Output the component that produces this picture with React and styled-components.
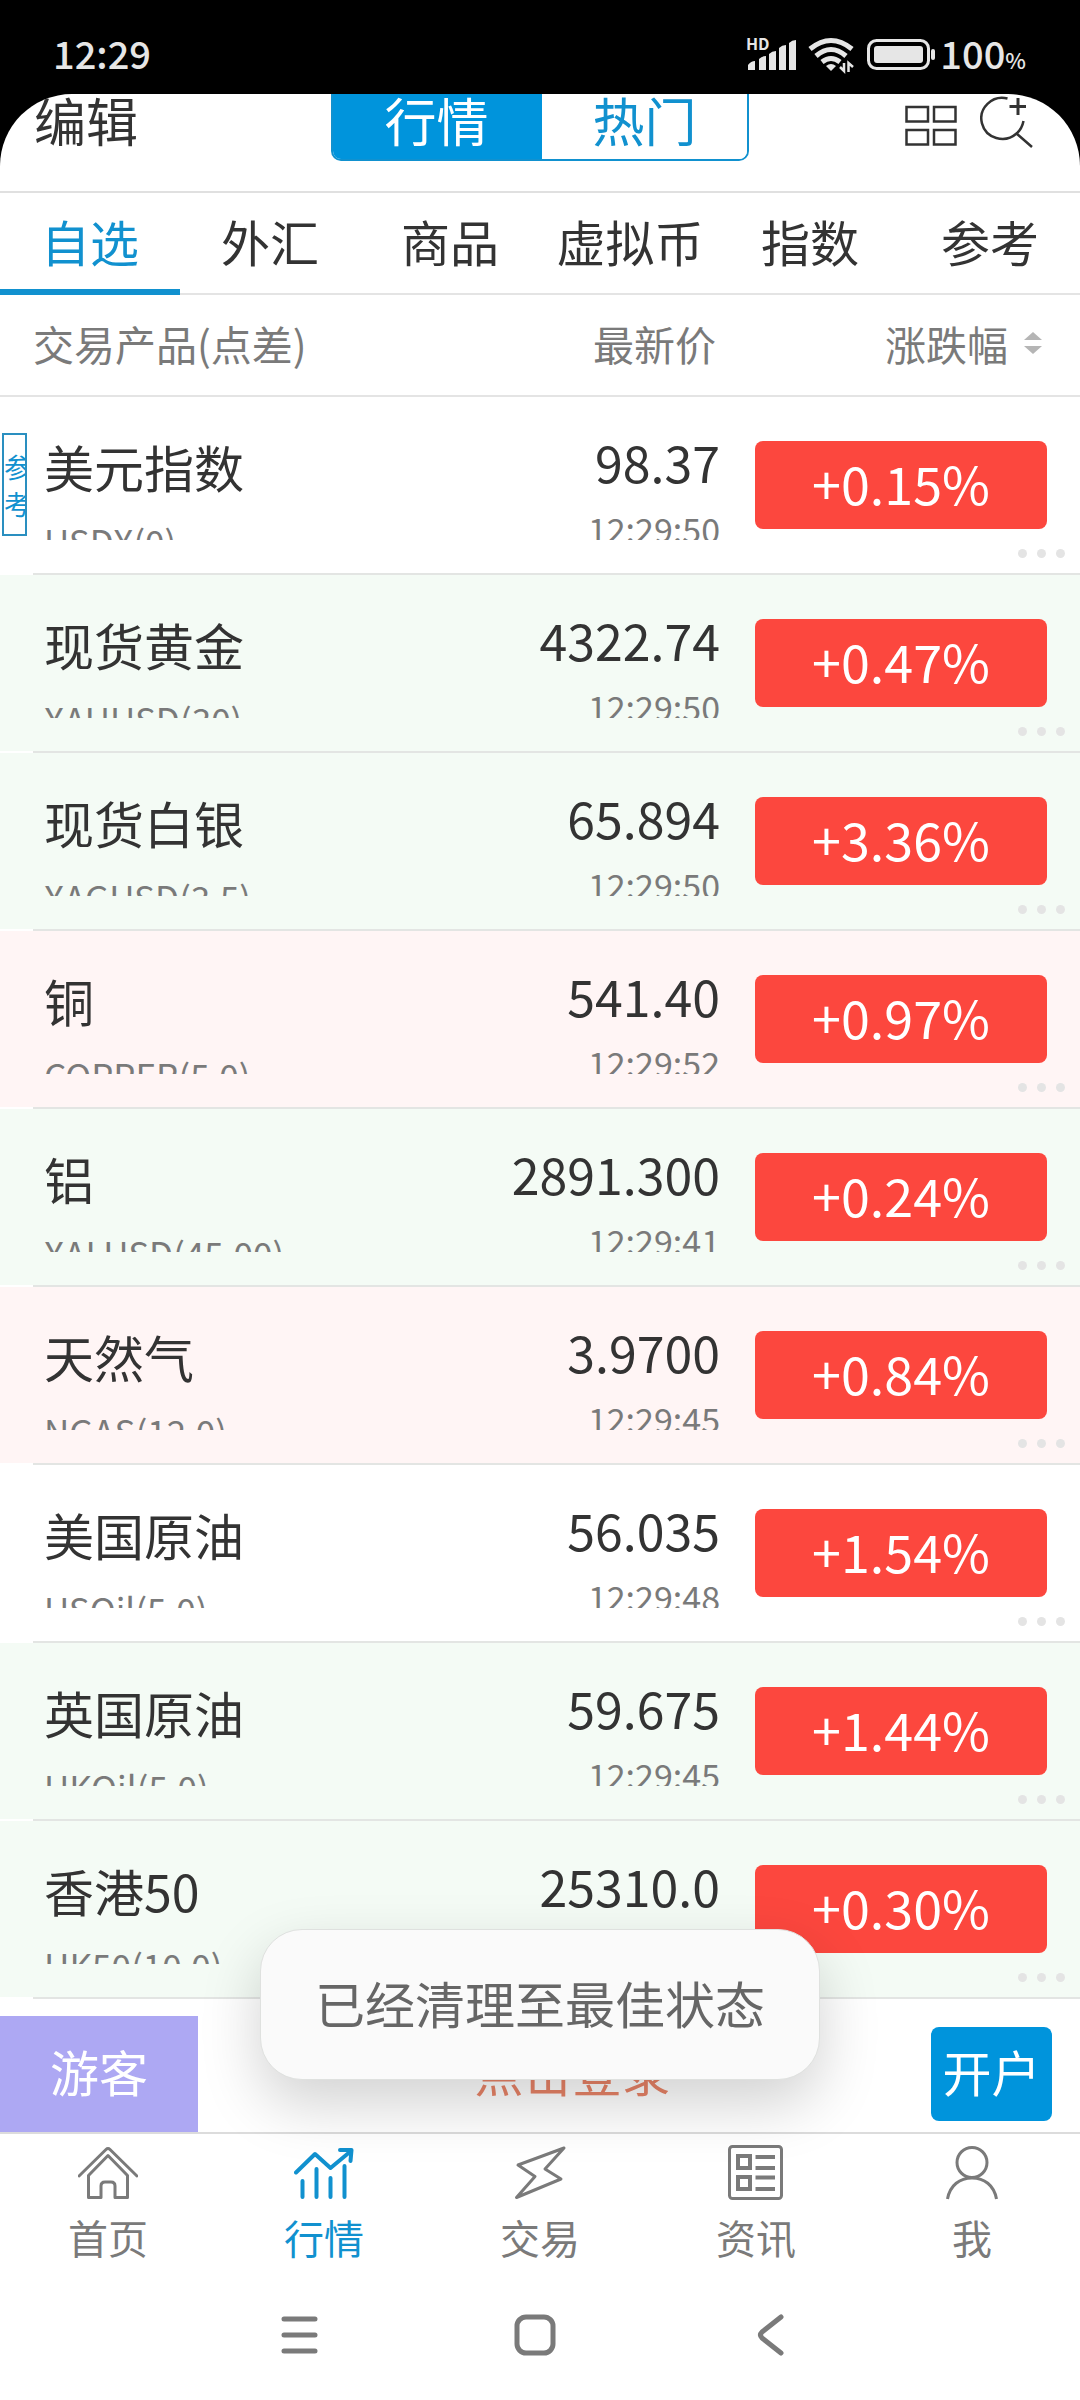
import React, { useState } from "react";
import styled, { createGlobalStyle } from "styled-components";

const quotes = [
  { name: "美元指数", code: "USDX(0)", price: "98.37", time: "12:29:50", change: "+0.15%", tag: "参考" },
  { name: "现货黄金", code: "XAUUSD(30)", price: "4322.74", time: "12:29:50", change: "+0.47%", trend: "green" },
  { name: "现货白银", code: "XAGUSD(3.5)", price: "65.894", time: "12:29:50", change: "+3.36%", trend: "green" },
  { name: "铜", code: "COPPER(5.0)", price: "541.40", time: "12:29:52", change: "+0.97%", trend: "red" },
  { name: "铝", code: "XALUSD(45.00)", price: "2891.300", time: "12:29:41", change: "+0.24%", trend: "green" },
  { name: "天然气", code: "NGAS(12.0)", price: "3.9700", time: "12:29:45", change: "+0.84%", trend: "red" },
  { name: "美国原油", code: "USOil(5.0)", price: "56.035", time: "12:29:48", change: "+1.54%" },
  { name: "英国原油", code: "UKOil(5.0)", price: "59.675", time: "12:29:45", change: "+1.44%", trend: "green" },
  { name: "香港50", code: "HK50(10.0)", price: "25310.0", time: "12:29:40", change: "+0.30%", trend: "green" },
];

const categories = ["自选", "外汇", "商品", "虚拟币", "指数", "参考"];

const rowColors = {
  green: "#f4fbf5",
  red: "#fff5f5",
};

const HomeIcon = () => (
  <NavIcon viewBox="0 0 60 60" aria-hidden="true">
    <path d="M1 33 28 6.500Q30 4.500 32 6.500L59 33" />
    <path d="M10.500 32.500 30 12.500 49.500 32.500V54.500H37V43Q37 39 33 39H27Q23 39 23 43V54.500H10.500Z" />
  </NavIcon>
);

const ChartIcon = () => (
  <NavIcon viewBox="0 0 60 60" $weight={4} aria-hidden="true">
    <path d="M2 29.500 21 11 36.500 25 57 8" />
    <path d="M46 7H57.500L56.500 18" />
    <path d="M8.500 38V54M22.500 26V54M36.500 35V54M50.500 23V54" />
  </NavIcon>
);

const TradeIcon = () => (
  <NavIcon viewBox="0 0 60 60" aria-hidden="true">
    <path d="M8 22 54 5 35 26 51 36 6.500 54.500 25 33.500Z" />
  </NavIcon>
);

const NewsIcon = () => (
  <NavIcon viewBox="0 0 60 60" aria-hidden="true">
    <rect x="3.500" y="3.500" width="52" height="52" rx="3" />
    <g strokeWidth="4" strokeLinecap="butt" strokeLinejoin="miter">
      <rect x="12" y="13" width="12" height="12" />
      <rect x="12" y="34" width="12" height="12" />
      <path d="M29.500 14H49M29.500 25H49M29.500 34.500H49M29.500 46H49" />
    </g>
  </NavIcon>
);

const UserIcon = () => (
  <NavIcon viewBox="0 0 60 60" aria-hidden="true">
    <circle cx="30" cy="19.500" r="15" />
    <path d="M5.500 56C8 42 18 35 30 35S52 42 54.500 56" strokeLinecap="butt" />
  </NavIcon>
);

const navItems = [
  { label: "首页", Icon: HomeIcon },
  { label: "行情", Icon: ChartIcon },
  { label: "交易", Icon: TradeIcon },
  { label: "资讯", Icon: NewsIcon },
  { label: "我", Icon: UserIcon },
];

const StatusIcons = () => (
  <StatusRight>
    <svg width="52" height="36" viewBox="0 0 52 36" fill="#e6e6e6" role="img" aria-label="信号">
      <text x="0" y="15" fontSize="16" fontWeight="700">
        HD
      </text>
      <path d="M2 35V30Q5 26 9 26V35ZM13 35V24Q16 21 20 21V35ZM23 35V19Q26 16 30 16V35ZM33 35V13Q36 10 40 10V35ZM43 35V8Q46 5 50 5V35Z" />
    </svg>
    <svg width="48" height="38" viewBox="0 0 48 38" role="img" aria-label="无线网络">
      <g fill="none" stroke="#e6e6e6" strokeWidth="5">
        <path d="M2 15Q23 -2 44 15" />
        <path d="M8 22Q23 9 38 22" />
        <path d="M14 28Q23 21 32 28" />
      </g>
      <path d="M18 32Q23 28 28 32L23 37Z" fill="#e6e6e6" />
      <path d="M36 29V37L32 33M40.500 38V29L45 33" fill="none" stroke="#e6e6e6" strokeWidth="2.500" />
    </svg>
    <svg width="72" height="36" viewBox="0 0 72 36" role="img" aria-label="电池">
      <rect x="2.500" y="5.500" width="60" height="28" rx="8" fill="none" stroke="#e6e6e6" strokeWidth="3" />
      <rect x="8" y="11" width="49" height="17" rx="3" fill="#e6e6e6" />
      <rect x="65" y="14" width="4" height="11" rx="2" fill="#e6e6e6" />
    </svg>
    <span>
      100<small>%</small>
    </span>
  </StatusRight>
);

const QuoteRow = ({ quote }) => (
  <Row $color={rowColors[quote.trend]}>
    <NameCell>
      <TagSlot>{quote.tag && <Tag>{quote.tag}</Tag>}</TagSlot>
      <div>
        <Name>{quote.name}</Name>
        <Code>{quote.code}</Code>
      </div>
    </NameCell>
    <PriceCell>
      <Price>{quote.price}</Price>
      <Time>{quote.time}</Time>
    </PriceCell>
    <ChangeCell>
      <Change>{quote.change}</Change>
      <MoreButton aria-label={`${quote.name} 更多`}>
        <i />
        <i />
        <i />
      </MoreButton>
    </ChangeCell>
  </Row>
);

const App = () => {
  const [view, setView] = useState("行情");
  const [category, setCategory] = useState("自选");
  const [page, setPage] = useState("行情");

  return (
    <Wrapper>
      <GlobalStyle />
      <StatusBar>
        <span>12:29</span>
        <StatusIcons />
      </StatusBar>
      <Screen>
        <TopBar>
          <EditButton>编辑</EditButton>
          <Segment>
            {["行情", "热门"].map((label) => (
              <SegmentButton key={label} $active={view === label} onClick={() => setView(label)}>
                {label}
              </SegmentButton>
            ))}
          </Segment>
          <TopActions>
            <IconButton aria-label="布局">
              <svg width="54" height="54" viewBox="0 0 54 54" fill="none" stroke="#333" strokeWidth="2.500">
                <path d="M2.500 13H24V27.500H2.500ZM30 13H51.500V27.500H30ZM2.500 36H24V50.500H2.500ZM30 36H51.500V50.500H30Z" />
              </svg>
            </IconButton>
            <IconButton aria-label="搜索添加">
              <svg width="54" height="54" viewBox="0 0 54 54" fill="none" stroke="#333" strokeWidth="2.500">
                <path d="M27.500 4.500A21 20.500 0 1 0 36.500 39.500Q42 35 43.500 27M36.500 39.500 52 53" />
                <path d="M29.500 12.500H46M38 4V21" strokeWidth="3" />
              </svg>
            </IconButton>
          </TopActions>
        </TopBar>
        <Tabs>
          {categories.map((label) => (
            <Tab key={label} $active={category === label} onClick={() => setCategory(label)}>
              {label}
            </Tab>
          ))}
        </Tabs>
        <Table>
          <thead>
            <HeadRow>
              <th>交易产品(点差)</th>
              <th>最新价</th>
              <th>
                <SortButton>
                  涨跌幅
                  <svg width="18" height="22" viewBox="0 0 18 22" fill="#b5b5b5" aria-hidden="true">
                    <path d="M9 0 18 8H0ZM9 22 0 14H18Z" />
                  </svg>
                </SortButton>
              </th>
            </HeadRow>
          </thead>
          <tbody>
            {quotes.map((quote) => (
              <QuoteRow key={quote.name} quote={quote} />
            ))}
          </tbody>
        </Table>
        <LoginBar>
          <Guest>游客</Guest>
          <LoginLink href="#login">点击登录</LoginLink>
          <OpenButton>开户</OpenButton>
        </LoginBar>
        <BottomNav>
          {navItems.map(({ label, Icon }) => (
            <NavButton key={label} $active={page === label} onClick={() => setPage(label)}>
              <Icon />
              {label}
            </NavButton>
          ))}
        </BottomNav>
        <SystemNav>
          <button aria-label="最近任务">
            <svg width="42" height="42" viewBox="0 0 42 42">
              <path d="M5 5H36M5 21H36M5 37H36" />
            </svg>
          </button>
          <button aria-label="主屏幕">
            <svg width="42" height="42" viewBox="0 0 42 42">
              <rect x="3" y="3" width="36" height="36" rx="9" />
            </svg>
          </button>
          <button aria-label="返回">
            <svg width="42" height="42" viewBox="0 0 42 42">
              <path d="M32 3 13 18Q10 21 13 24L32 39" />
            </svg>
          </button>
        </SystemNav>
      </Screen>
      <Toast role="status">已经清理至最佳状态</Toast>
    </Wrapper>
  );
};

const GlobalStyle = createGlobalStyle`
  * {
    box-sizing: border-box;
  }
  body {
    margin: 0;
    background: #000;
    font-family: "Noto Sans CJK SC", sans-serif;
  }
  button {
    margin: 0;
    padding: 0;
    border: 0;
    background: none;
    color: inherit;
    font: inherit;
    cursor: pointer;
  }
`;

const Wrapper = styled.div`
  position: relative;
  display: flex;
  flex-direction: column;
  min-height: 100vh;
  background: #000;
  color: #333;
`;

const StatusBar = styled.div`
  display: flex;
  align-items: center;
  justify-content: space-between;
  height: 94px;
  padding: 12px 54px 0 53px;
  color: #e6e6e6;
  font-size: 38px;
  font-weight: 500;
  line-height: 76px;
`;

const StatusRight = styled.div`
  display: flex;
  align-items: center;
  gap: 10px;
  svg {
    overflow: visible;
  }
  small {
    font-size: 22px;
    line-height: 1;
  }
  span {
    margin-left: -8px;
  }
`;

const Screen = styled.main`
  display: flex;
  flex-direction: column;
  flex: 1;
  overflow: hidden;
  border-radius: 72px 72px 0 0;
  background: #fff;
`;

const TopBar = styled.header`
  display: grid;
  grid-template-columns: 1fr auto 1fr;
  align-items: start;
  height: 99px;
  border-bottom: 2px solid #e0e0e0;
  font-size: 52px;
  line-height: 52px;
`;

const EditButton = styled.button`
  justify-self: start;
  padding-left: 34px;
`;

const Segment = styled.div`
  display: flex;
  overflow: hidden;
  border: 2px solid #1191cf;
  border-top: 0;
  border-radius: 0 0 10px 10px;
`;

const SegmentButton = styled.button`
  width: 207px;
  padding-bottom: 13px;
  background: ${(props) => (props.$active ? "#0094dc" : "#fff")};
  color: ${(props) => (props.$active ? "#fff" : "#1191cf")};
  & + & {
    border-left: 2px solid #0094dc;
  }
`;

const TopActions = styled.div`
  display: flex;
  justify-content: flex-end;
  gap: 22px;
  padding-right: 46px;
`;

const IconButton = styled.button`
  height: 54px;
  svg {
    display: block;
  }
`;

const Tabs = styled.nav`
  display: grid;
  grid-template-columns: repeat(6, 1fr);
  border-bottom: 2px solid #e4e4e4;
`;

const Tab = styled.button`
  height: 102px;
  margin-bottom: -2px;
  padding-bottom: 2px;
  border-bottom: 6px solid ${(props) => (props.$active ? "#1191cf" : "transparent")};
  color: ${(props) => (props.$active ? "#1191cf" : "#333")};
  font-size: 49px;
`;

const Table = styled.table`
  display: block;
  thead,
  tbody {
    display: block;
  }
  th,
  td {
    padding: 0;
    font-weight: 400;
  }
`;

const HeadRow = styled.tr`
  display: grid;
  grid-template-columns: 1fr 1fr 360px;
  height: 102px;
  border-bottom: 2px solid #e4e4e4;
  color: #7a7a7a;
  font-size: 41px;
  line-height: 96px;
  text-align: right;
  th:first-child {
    padding-left: 33px;
    text-align: left;
    white-space: nowrap;
  }
  th:nth-child(2) {
    padding-right: 4px;
  }
  th:last-child {
    padding-right: 38px;
  }
`;

const SortButton = styled.button`
  display: inline-flex;
  align-items: center;
  gap: 16px;
`;

/* the divider is inset on the left, the gap beside it stays white */
const Row = styled.tr`
  display: grid;
  grid-template-columns: 1fr 1fr 360px;
  height: 178px;
  background: linear-gradient(#e3e5e3, #e3e5e3) 33px 100% / 100% 2px no-repeat,
    linear-gradient(#fff, #fff) 0 100% / 100% 2px no-repeat,
    ${(props) => props.$color || "#fff"};
`;

const NameCell = styled.td`
  display: flex;
  height: 143px;
  overflow: hidden;
  white-space: nowrap;
`;

const TagSlot = styled.div`
  flex: none;
  width: 44px;
  padding: 36px 0 0 2px;
`;

const Tag = styled.div`
  display: flex;
  flex-direction: column;
  justify-content: center;
  width: 25px;
  height: 103px;
  overflow: hidden;
  border: 2px solid #2a8fc0;
  color: #1191cf;
  font-size: 27px;
  line-height: 37px;
  white-space: normal;
  word-break: break-all;
`;

const Name = styled.div`
  padding-top: 39px;
  font-size: 50px;
  line-height: 60px;
`;

const Code = styled.div`
  margin-top: 25px;
  color: #7a7a7a;
  font-size: 35px;
  line-height: 40px;
`;

const PriceCell = styled.td`
  height: 143px;
  overflow: hidden;
  text-align: right;
`;

const Price = styled.div`
  padding-top: 34px;
  font-size: 50px;
  line-height: 60px;
`;

const Time = styled.div`
  margin-top: 18px;
  color: #7a7a7a;
  font-size: 34px;
  line-height: 40px;
`;

const ChangeCell = styled.td`
  display: flex;
  flex-direction: column;
`;

const Change = styled.div`
  height: 88px;
  margin: 44px 33px 0 35px;
  border-radius: 8px;
  background: #fc473e;
  color: #fff;
  font-size: 52px;
  line-height: 84px;
  text-align: center;
`;

const MoreButton = styled.button`
  display: flex;
  align-self: flex-end;
  gap: 10px;
  margin-top: 20px;
  padding-right: 15px;
  i {
    width: 9px;
    height: 9px;
    border-radius: 50%;
    background: #e4e4e4;
  }
`;

const LoginBar = styled.div`
  display: flex;
  align-items: center;
  padding: 17px 28px 0 0;
  font-size: 49px;
  line-height: 110px;
`;

const Guest = styled.div`
  width: 198px;
  height: 116px;
  background: #ada8f3;
  color: #fff;
  text-align: center;
`;

const LoginLink = styled.a`
  flex: 1;
  height: 116px;
  padding-left: 16px;
  color: #e98468;
  text-align: center;
  text-decoration: none;
`;

const OpenButton = styled.button`
  width: 121px;
  height: 94px;
  padding-bottom: 6px;
  border-radius: 8px;
  background: #0094dc;
  color: #fff;
  line-height: 88px;
`;

const BottomNav = styled.nav`
  display: grid;
  grid-template-columns: repeat(5, 1fr);
  padding: 9px 0;
  border-top: 2px solid #dcdcdc;
`;

const NavButton = styled.button`
  display: flex;
  flex-direction: column;
  align-items: center;
  gap: 10px;
  color: ${(props) => (props.$active ? "#1191cf" : "#7a7a7a")};
  font-size: 40px;
  line-height: 48px;
`;

const NavIcon = styled.svg`
  width: 60px;
  height: 60px;
  fill: none;
  stroke: currentColor;
  stroke-width: ${(props) => props.$weight || 3};
  stroke-linecap: round;
  stroke-linejoin: round;
`;

const SystemNav = styled.div`
  display: grid;
  flex: 1;
  grid-template-columns: repeat(3, 1fr);
  align-items: center;
  min-height: 130px;
  padding: 4px 193px 0 182px;
  svg {
    fill: none;
    stroke: #7a7a7a;
    stroke-width: 5;
    stroke-linecap: round;
    stroke-linejoin: round;
  }
`;

const Toast = styled.div`
  position: absolute;
  bottom: 320px;
  left: 50%;
  padding: 42px 54px 47px;
  transform: translateX(-50%);
  border: 1px solid #dfe1df;
  border-radius: 42px;
  background: #fafafa;
  box-shadow: 0 24px 60px rgba(0, 0, 0, 0.18);
  color: #666;
  font-size: 50px;
  line-height: 60px;
  white-space: nowrap;
`;

export default App;
